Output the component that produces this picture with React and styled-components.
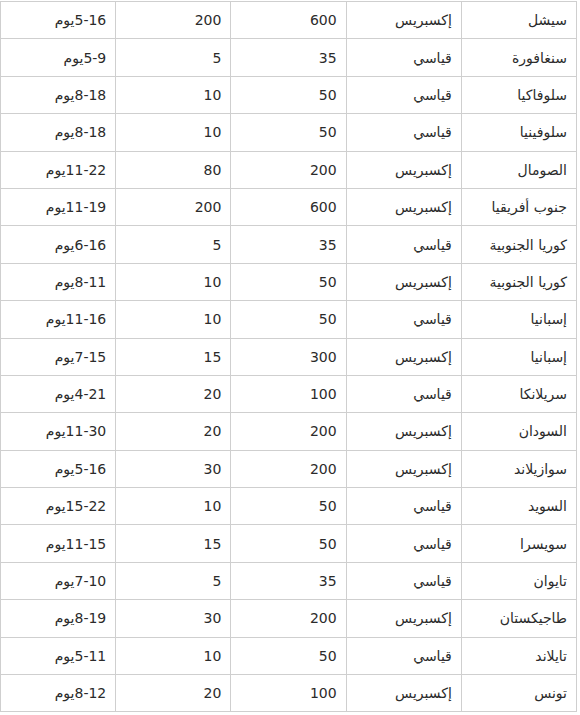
import React from "react";
import styled, { createGlobalStyle } from "styled-components";

const GlobalStyle = createGlobalStyle`
  html, body {
    margin: 0;
    padding: 0;
    background: #ffffff;
  }
  body {
    font-family: "DejaVu Sans", "Noto Sans", sans-serif;
  }
`;

const Page = styled.div`
  padding-top: 1px;
  width: 577px;
`;

const Table = styled.table`
  direction: rtl;
  width: 577px;
  border-collapse: collapse;
  table-layout: fixed;
`;

const Cell = styled.td`
  height: 36.4px;
  padding: 0 9px 0 6px;
  border: 1px solid #cfcfcf;
  text-align: right;
  vertical-align: middle;
  font-size: 14px;
  color: #2b2b2b;
  white-space: nowrap;
  box-sizing: content-box;
`;

const rows = [
  ["سيشل", "إكسبريس", "600", "200", "5-16يوم"],
  ["سنغافورة", "قياسي", "35", "5", "5-9يوم"],
  ["سلوفاكيا", "قياسي", "50", "10", "8-18يوم"],
  ["سلوفينيا", "قياسي", "50", "10", "8-18يوم"],
  ["الصومال", "إكسبريس", "200", "80", "11-22يوم"],
  ["جنوب أفريقيا", "إكسبريس", "600", "200", "11-19يوم"],
  ["كوريا الجنوبية", "قياسي", "35", "5", "6-16يوم"],
  ["كوريا الجنوبية", "إكسبريس", "50", "10", "8-11يوم"],
  ["إسبانيا", "قياسي", "50", "10", "11-16يوم"],
  ["إسبانيا", "إكسبريس", "300", "15", "7-15يوم"],
  ["سريلانكا", "قياسي", "100", "20", "4-21يوم"],
  ["السودان", "إكسبريس", "200", "20", "11-30يوم"],
  ["سوازيلاند", "إكسبريس", "200", "30", "5-16يوم"],
  ["السويد", "قياسي", "50", "10", "15-22يوم"],
  ["سويسرا", "قياسي", "50", "15", "11-15يوم"],
  ["تايوان", "قياسي", "35", "5", "7-10يوم"],
  ["طاجيكستان", "إكسبريس", "200", "30", "8-19يوم"],
  ["تايلاند", "قياسي", "50", "10", "5-11يوم"],
  ["تونس", "إكسبريس", "100", "20", "8-12يوم"],
];

export default function App() {
  return (
    <>
      <GlobalStyle />
      <Page>
        <Table>
          <tbody>
            {rows.map((r, i) => (
              <tr key={i}>
                {r.map((c, j) => (
                  <Cell key={j}>{c}</Cell>
                ))}
              </tr>
            ))}
          </tbody>
        </Table>
      </Page>
    </>
  );
}
